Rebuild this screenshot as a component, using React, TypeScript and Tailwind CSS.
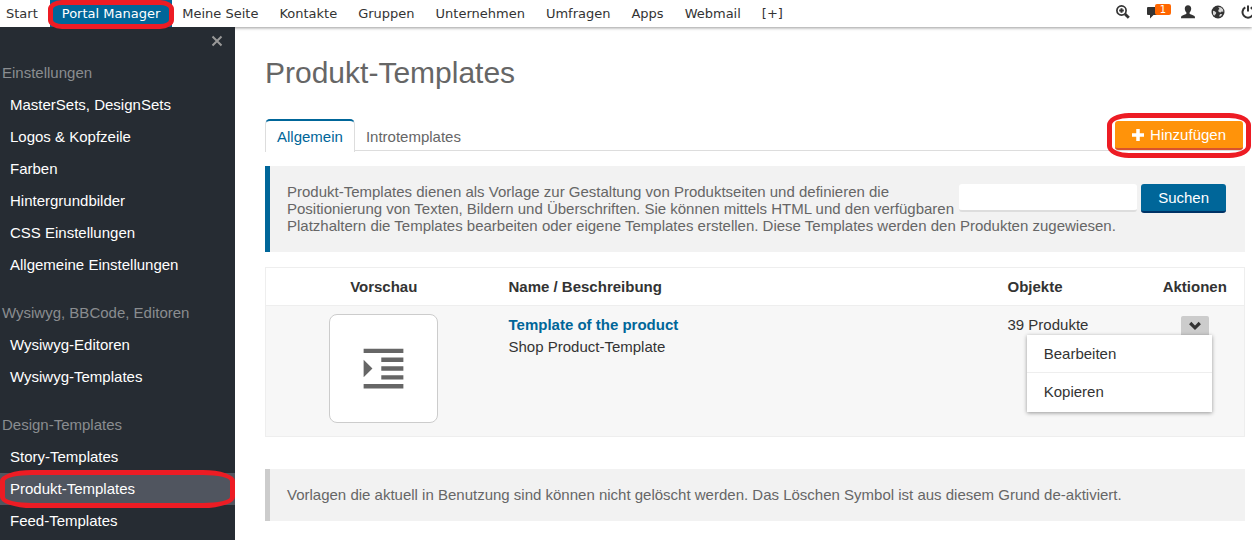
import { MdFormatIndentIncrease } from 'react-icons/md';

const nav = ['Meine Seite', 'Kontakte', 'Gruppen', 'Unternehmen', 'Umfragen', 'Apps', 'Webmail', '[+]'];

const groups = [
  {
    title: 'Einstellungen',
    items: ['MasterSets, DesignSets', 'Logos & Kopfzeile', 'Farben', 'Hintergrundbilder', 'CSS Einstellungen', 'Allgemeine Einstellungen'],
  },
  { title: 'Wysiwyg, BBCode, Editoren', items: ['Wysiwyg-Editoren', 'Wysiwyg-Templates'] },
  { title: 'Design-Templates', items: ['Story-Templates', 'Produkt-Templates', 'Feed-Templates'] },
];

// red marker ring, placed over the highlighted control
function Marker({ className }: { className: string }) {
  return <span aria-hidden="true" className={`pointer-events-none absolute z-20 border-[#ed1c24] ${className}`} />;
}

function TopIcons() {
  return (
    <div className="flex shrink-0 items-center text-[#333]">
      <a href="#suche" aria-label="Suche" className="mr-[17px]">
        <svg width="14" height="14" viewBox="0 0 14 14" fill="none" stroke="currentColor">
          <circle cx="5.5" cy="5.5" r="4.6" strokeWidth="1.7" />
          <path d="M5.500 3.200v4.600M3.200 5.500h4.600" strokeWidth="2" />
          <path d="M9 9l3.800 3.800" strokeWidth="2.800" />
        </svg>
      </a>
      <a href="#nachrichten" aria-label="Nachrichten" className="relative mr-[22px]">
        <svg width="12" height="14" viewBox="0 0 12 14" fill="currentColor">
          <path d="M1 2h11v8H6.500L3 13.500V10H1a1 1 0 0 1-1-1V3a1 1 0 0 1 1-1z" />
        </svg>
        <span className="absolute -top-px left-2 h-[11px] w-4 rounded-xs bg-[#f60] text-center text-[10px] leading-[11px] text-white">1</span>
      </a>
      <a href="#profil" aria-label="Profil" className="mr-4">
        <svg width="14" height="14" viewBox="0 0 14 14" fill="currentColor">
          <path d="M7 .3c2 0 3.200 1.300 3.200 3.200 0 1.700-.7 3-1.600 3.900v1.300c.4.7 4 1.400 4.900 2.400.4.5.5 1.300.5 2.200H0c0-.9.1-1.700.5-2.200.9-1 4.500-1.700 4.900-2.400V7.400C4.500 6.500 3.800 5.200 3.800 3.500 3.800 1.600 5 .3 7 .3z" />
        </svg>
      </a>
      <a href="#sprache" aria-label="Sprache" className="mr-4">
        <svg width="14" height="14" viewBox="0 0 14 14">
          <circle cx="7" cy="7" r="6.5" fill="#333" />
          <path d="M7.200 2l3 .4 1.900 2.200.2 2.200-1.700-.4-1 1.200-1.900-.7-.5-1.800 1.300-1.100zM2 5.700l1.800.6 1.500 1.500-.5 1.300-1 .8-.4.900L2 9.200zM9.200 9l1.900.1-.9 1.800-1.600.8-.3-1.200z" fill="#fff" opacity=".8" />
        </svg>
      </a>
      <a href="#abmelden" aria-label="Abmelden">
        <svg width="14" height="14" viewBox="0 0 14 14" fill="none" stroke="currentColor" strokeWidth="2">
          <path d="M4.300 2.400a5.500 5.500 0 1 0 5.400 0M7 .5v6" />
        </svg>
      </a>
    </div>
  );
}

function TopBar() {
  return (
    <header className="relative flex h-[27px] items-stretch justify-between bg-white font-['DejaVu_Sans',Verdana,sans-serif] text-[13px] text-[#333] shadow-[0_1px_3px_rgba(0,0,0,0.4)]">
      <nav className="-ml-[6px] flex">
        <a href="#start" className="px-3 leading-[27px] whitespace-nowrap">Start</a>
        <a href="#portal" className="relative bg-[#069] px-3 leading-[27px] whitespace-nowrap text-white">
          Portal Manager
          <Marker className="-inset-x-[2px] top-0 -bottom-[2px] rounded-[14px/9px] border-[5px]" />
        </a>
        <div className="flex gap-px">
          {nav.map((label) => (
            <a key={label} href="#" className="px-[10px] leading-[27px] whitespace-nowrap">{label}</a>
          ))}
        </div>
      </nav>
      <div className="-mr-[3px] flex items-center pb-[3px]">
        <TopIcons />
      </div>
    </header>
  );
}

function Sidebar() {
  return (
    <aside className="relative w-[235px] shrink-0 bg-[#262c33]">
      <button type="button" aria-label="Schließen" className="absolute top-2 right-3 text-[#999]">
        <svg width="12" height="12" viewBox="0 0 12 12" fill="none" stroke="currentColor" strokeWidth="2">
          <path d="M1.500 1.500l9 9M10.500 1.500l-9 9" />
        </svg>
      </button>
      <nav className="flex flex-col gap-4 pt-[30px]">
        {groups.map((g) => (
          <section key={g.title}>
            <h2 className="pl-[2px] leading-8 text-[#8a8d90]">{g.title}</h2>
            <ul>
              {g.items.map((item) => (
                <li key={item} className="relative">
                  {item === 'Produkt-Templates' ? (
                    <>
                      <a href="#produkt" className="block bg-[#50555f] pl-[10px] leading-8 text-white">{item}</a>
                      <Marker className="inset-x-0 -inset-y-[3px] rounded-[32px/11px] border-[5px]" />
                    </>
                  ) : (
                    <a href="#" className="block pl-[10px] leading-8 text-white">{item}</a>
                  )}
                </li>
              ))}
            </ul>
          </section>
        ))}
      </nav>
    </aside>
  );
}

function TemplateTable() {
  return (
    <table className="mt-[15px] w-full table-fixed border-collapse border border-[#eee] text-left text-[#333]">
      <colgroup>
        <col className="w-[236px]" />
        <col />
        <col className="w-[138px]" />
        <col className="w-[99px]" />
      </colgroup>
      <thead>
        <tr className="h-[38px] border-b border-[#eee]">
          <th className="text-center">Vorschau</th>
          <th className="pl-[7px]">Name / Beschreibung</th>
          <th>Objekte</th>
          <th className="text-center">Aktionen</th>
        </tr>
      </thead>
      <tbody>
        <tr className="bg-[#f7f7f7] align-top leading-[22px]">
          <td className="px-2 pt-2 pb-[13px]">
            <div className="mx-auto flex size-[109px] items-center justify-center rounded-lg border border-[#ccc] bg-white text-[#666]">
              <MdFormatIndentIncrease size={53} />
            </div>
          </td>
          <td className="pt-2 pl-[7px]">
            <a href="#template" className="font-bold text-[#069]">Template of the product</a>
            <p>Shop Product-Template</p>
          </td>
          <td className="pt-2">39 Produkte</td>
          <td className="pt-[10px]">
            <div className="relative mx-auto w-7">
              <button type="button" aria-label="Aktionen" className="flex h-[19px] w-full items-center justify-center rounded-t-xs bg-[#ccc]">
                <svg width="12" height="10" viewBox="0 0 12 10" fill="none" stroke="#333" strokeWidth="3.200">
                  <path d="M1.200 2l4.800 4.800L10.800 2" />
                </svg>
              </button>
              <ul className="absolute top-full -right-[3px] z-10 w-[185px] divide-y divide-[#eee] bg-white pb-px shadow-[0_1px_4px_rgba(0,0,0,0.4)]">
                <li className="h-[38px]"><a href="#bearbeiten" className="block px-[17px] leading-[38px]">Bearbeiten</a></li>
                <li className="h-[38px]"><a href="#kopieren" className="block px-[17px] leading-[38px]">Kopieren</a></li>
              </ul>
            </div>
          </td>
        </tr>
      </tbody>
    </table>
  );
}

export default function App() {
  return (
    <div className="flex h-screen flex-col overflow-hidden bg-white font-['Liberation_Sans',Arial,sans-serif] text-[15px] leading-[17px] text-[#666]">
      <TopBar />
      <div className="flex min-h-0 flex-1">
        <Sidebar />
        <main className="min-w-0 flex-1 pt-7 pr-[7px] pl-[30px]">
          <h1 className="text-[30px] leading-9">Produkt-Templates</h1>

          <div className="mt-7 flex h-8 items-end justify-between border-b border-[#ddd]">
            <div className="-mb-[2px] flex">
              <a href="#allgemein" className="rounded-t-[5px] border-x border-t-2 border-x-[#ddd] border-t-[#069] bg-white px-[11px] pt-[7px] pb-[7px] text-[#069]">Allgemein</a>
              <a href="#intro" className="px-[11px] pt-[9px] pb-[7px]">Introtemplates</a>
            </div>
            <div className="relative mr-[2px]">
              <button type="button" className="flex h-[29px] items-center gap-[6px] rounded-[3px] border-b-2 border-[#d9532c] bg-[#ff930a] px-[17px] text-white">
                <svg width="12" height="12" viewBox="0 0 12 12" fill="none" stroke="currentColor" strokeWidth="3.500">
                  <path d="M6 0v12M0 6h12" />
                </svg>
                Hinzufügen
              </button>
              <Marker className="-inset-x-2 -inset-y-2 rounded-[22px/12px] border-[5px]" />
            </div>
          </div>

          <div className="mt-[15px] border-l-[5px] border-[#069] bg-[#f2f2f2] pt-[17px] pr-[19px] pb-[18px] pl-[17px]">
            <form className="float-right flex gap-1 pt-px">
              <input type="text" aria-label="Suche" className="h-7 w-[178px] rounded-[3px] border-b-2 border-[#ddd] bg-white px-2 text-[#333] outline-none" />
              <button type="button" className="h-[29px] rounded-[3px] border-b-2 border-[#036] bg-[#069] px-[17px] text-white">Suchen</button>
            </form>
            <p>
              Produkt-Templates dienen als Vorlage zur Gestaltung von Produktseiten und definieren die Positionierung von Texten, Bildern und Überschriften. Sie können mittels HTML und den verfügbaren Platzhaltern die Templates bearbeiten oder eigene Templates erstellen. Diese Templates werden den Produkten zugewiesen.
            </p>
          </div>

          <TemplateTable />

          <p className="mt-8 border-l-[5px] border-[#ccc] bg-[#f2f2f2] pt-[17px] pr-[19px] pb-[18px] pl-[17px]">
            Vorlagen die aktuell in Benutzung sind können nicht gelöscht werden. Das Löschen Symbol ist aus diesem Grund de-aktiviert.
          </p>
        </main>
      </div>
    </div>
  );
}
